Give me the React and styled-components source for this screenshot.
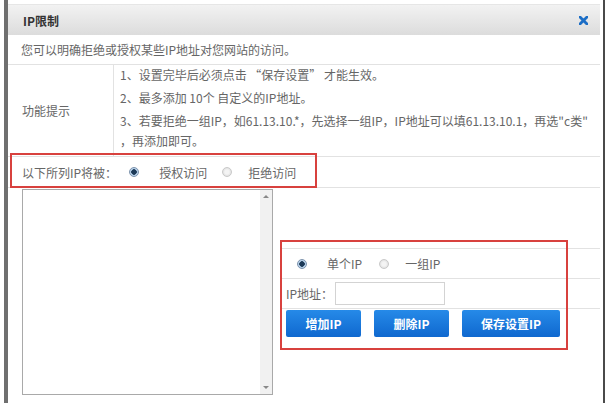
import React from "react";
import styled, { createGlobalStyle } from "styled-components";

const GlobalStyle = createGlobalStyle`
  body {
    margin: 0;
    background: #fff;
    font-family: "Noto Sans CJK SC", "Liberation Sans", sans-serif;
    font-size: 12px;
    color: #666;
  }
`;

const Page = styled.div`
  width: 610px;
  height: 403px;
  overflow: hidden;
  background: #fff;
`;

const Dialog = styled.div`
  margin-left: 4px;
  width: 592px;
  height: 403px;
  padding: 4px 3px 0 0;
  border-left: 4px solid #6f6f6f;
  border-right: 2px solid #4a4a4a;
`;

const Header = styled.div`
  height: 31px;
  display: flex;
  align-items: center;
  justify-content: space-between;
  padding: 0 12px 0 15px;
  background: linear-gradient(#f2f2f2, #dcdcdc);
  border-top: 1px solid #e6e6e6;
  box-sizing: border-box;
  h1 {
    margin: 0;
    font-size: 12px;
    font-weight: bold;
    color: #333;
  }
`;

const Intro = styled.div`
  height: 29px;
  line-height: 29px;
  padding-left: 13px;
  border-bottom: 1px solid #e2e2e2;
`;

const TipRow = styled.div`
  display: flex;
  border-bottom: 1px solid #e2e2e2;
`;

const Label = styled.div`
  width: 91px;
  padding-left: 14px;
  display: flex;
  align-items: center;
  border-right: 1px solid #e2e2e2;
`;

const TipList = styled.div`
  flex: 1;
  padding: 0 0 2px 6px;
  p {
    margin: 0 0 3px;
    line-height: 20px;
    white-space: nowrap;
  }
`;

const ModeRow = styled.div`
  position: relative;
  height: 30px;
  display: flex;
  align-items: center;
  padding-left: 14px;
  border-bottom: 1px solid #e2e2e2;
`;

const Mark = styled.div`
  position: absolute;
  left: ${(p) => p.$left}px;
  top: ${(p) => p.$top}px;
  width: ${(p) => p.$w}px;
  height: ${(p) => p.$h}px;
  border: 2px solid #d8413e;
  box-sizing: border-box;
  pointer-events: none;
`;

const Choice = styled.label`
  display: flex;
  align-items: center;
  margin-left: ${(p) => p.$gap || 0}px;
  span {
    margin-left: ${(p) => p.$textGap || 20}px;
  }
`;

const Radio = styled.i`
  display: inline-block;
  width: 10px;
  height: 10px;
  border-radius: 50%;
  box-sizing: border-box;
  border: 1px solid ${(p) => (p.$on ? "#7d93ad" : "#c9c9c9")};
  background: ${(p) =>
    p.$on
      ? "radial-gradient(circle, #1d3a58 0 2.5px, #b9d2ea 3px)"
      : "radial-gradient(circle, #f4f4f4 0 2px, #e2e2e2 4px)"};
`;

const Bottom = styled.div`
  display: flex;
`;

const ListCell = styled.div`
  width: 265px;
  padding: 1px 0 0 14px;
  box-sizing: border-box;
`;

const ListBox = styled.div`
  display: flex;
  width: 251px;
  height: 206px;
  border: 1px solid #a9a9a9;
  box-sizing: border-box;
`;

const ListArea = styled.div`
  flex: 1;
`;

const Scroll = styled.div`
  width: 12px;
  background: #f1f1f1;
  display: flex;
  flex-direction: column;
  justify-content: space-between;
  align-items: center;
  padding: 5px 0;
`;

const Arrow = styled.i`
  width: 0;
  height: 0;
  border-left: 3px solid transparent;
  border-right: 3px solid transparent;
  ${(p) =>
    p.$down
      ? "border-top: 3px solid #888;"
      : "border-bottom: 3px solid #888;"}
`;

const FormCell = styled.div`
  position: relative;
  flex: 1;
  padding: 60px 0 0 9px;
`;

const FormRow = styled.div`
  height: 29px;
  display: flex;
  align-items: center;
  padding-left: ${(p) => p.$pad || 4}px;
  border-top: 1px solid #e2e2e2;
  &:last-child {
    border-bottom: 1px solid #e2e2e2;
  }
`;

const Input = styled.input`
  width: 110px;
  height: 23px;
  margin-left: 2px;
  border: 1px solid #d3d3d3;
  box-sizing: border-box;
  outline: none;
`;

const Btn = styled.button`
  width: ${(p) => p.$w}px;
  height: 27px;
  margin-right: 13px;
  border: none;
  border-radius: 2px;
  background: linear-gradient(#268ae8, #0f68cf);
  color: #fff;
  font-family: "Noto Sans CJK SC", "Liberation Sans", sans-serif;
  font-size: 12px;
  font-weight: bold;
  padding: 0;
`;

const Close = () => (
  <svg width="9" height="9" viewBox="0 0 9 9">
    <path d="M1 1 L8 8 M8 1 L1 8" stroke="#1c6ec6" strokeWidth="2.8" strokeLinecap="square" />
  </svg>
);

export default function App() {
  return (
    <>
      <GlobalStyle />
      <Page>
        <Dialog>
          <Header>
            <h1>IP限制</h1>
            <Close />
          </Header>
          <Intro>您可以明确拒绝或授权某些IP地址对您网站的访问。</Intro>
          <TipRow>
            <Label>功能提示</Label>
            <TipList>
              <p>1、设置完毕后必须点击 “保存设置” 才能生效。</p>
              <p>2、最多添加 10个 自定义的IP地址。</p>
              <p>
                3、若要拒绝一组IP，如61.13.10.*，先选择一组IP，IP地址可以填61.13.10.1，再选"c类"
                <br />
                ，再添加即可。
              </p>
            </TipList>
          </TipRow>
          <ModeRow>
            以下所列IP将被：
            <Choice $gap={12}>
              <Radio $on />
              <span>授权访问</span>
            </Choice>
            <Choice $gap={15} $textGap={16}>
              <Radio />
              <span>拒绝访问</span>
            </Choice>
            <Mark $left={2} $top={-4} $w={307} $h={35} />
          </ModeRow>
          <Bottom>
            <ListCell>
              <ListBox>
                <ListArea />
                <Scroll>
                  <Arrow />
                  <Arrow $down />
                </Scroll>
              </ListBox>
            </ListCell>
            <FormCell>
              <FormRow $pad={15}>
                <Choice>
                  <Radio $on />
                  <span>单个IP</span>
                </Choice>
                <Choice $gap={17} $textGap={16}>
                  <Radio />
                  <span>一组IP</span>
                </Choice>
              </FormRow>
              <FormRow>
                IP地址：
                <Input />
              </FormRow>
              <FormRow>
                <Btn $w={75}>增加IP</Btn>
                <Btn $w={75}>删除IP</Btn>
                <Btn $w={98}>保存设置IP</Btn>
              </FormRow>
              <Mark $left={7} $top={52} $w={288} $h={110} />
            </FormCell>
          </Bottom>
        </Dialog>
      </Page>
    </>
  );
}
